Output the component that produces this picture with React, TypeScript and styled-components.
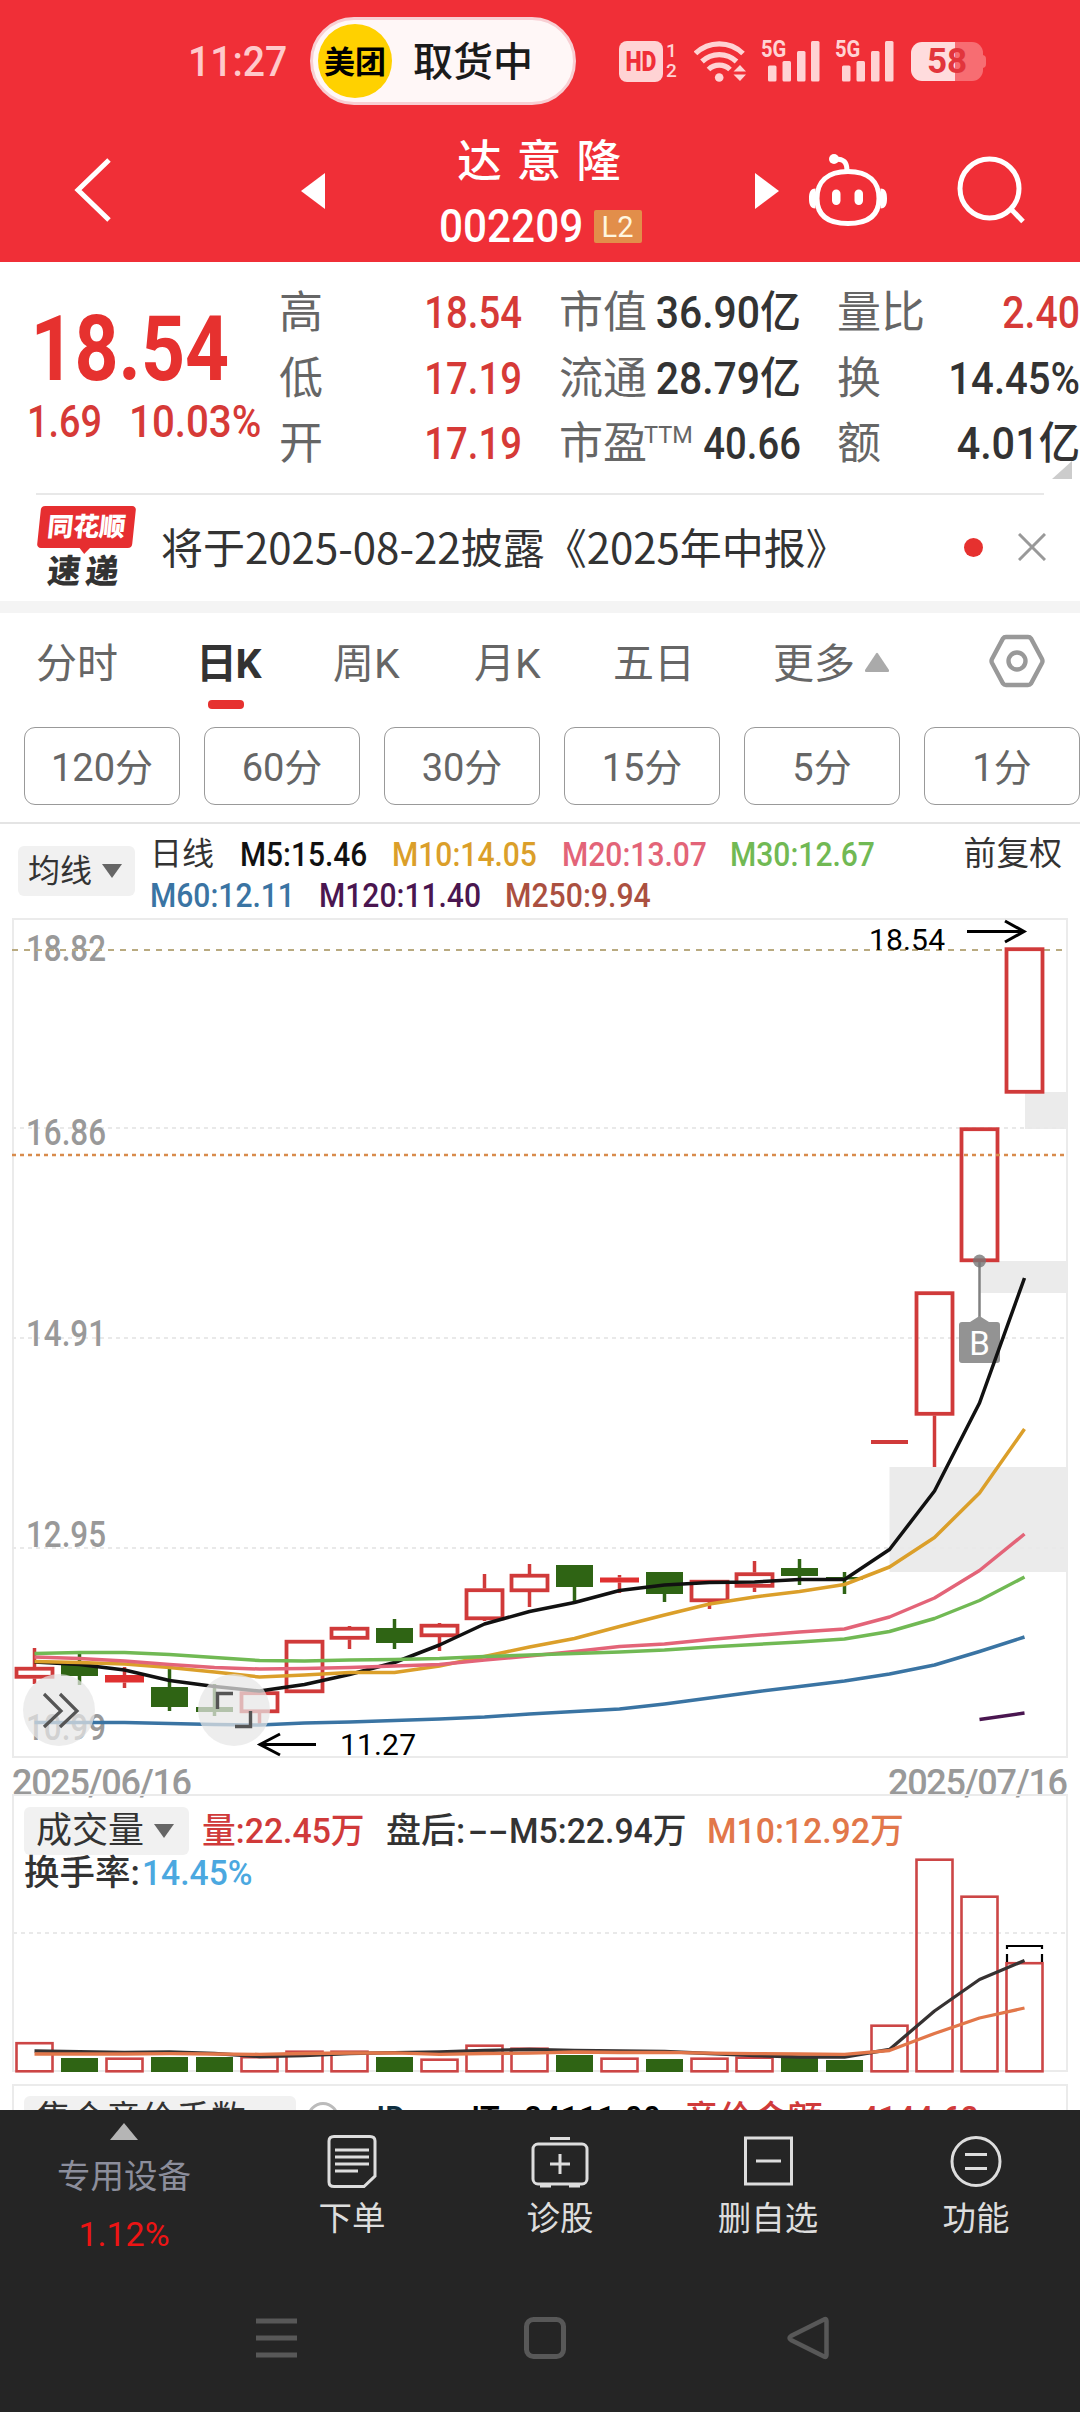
import React from 'react';
import styled, { createGlobalStyle } from 'styled-components';

interface CandleData {
  kind: 'hollow' | 'solid' | 'down' | 'flat';
  top: number;
  bottom: number;
  high: number;
  low: number;
}

interface LineData {
  color: string;
  start: number;
  values: number[];
}

const STEP: number = 45;
const FIRST: number = 34.5;
const RED: string = '#d03a3a';
const GREEN: string = '#2f6414';

const centerOf = (index: number): number => FIRST + STEP * index;

const toPoints = ({ start, values }: LineData): string =>
  values.map((y: number, i: number) => `${centerOf(start + i)},${y}`).join(' ');

const row = (kind: CandleData['kind'], top: number, bottom: number, high: number = top, low: number = bottom): CandleData =>
  ({ kind, top, bottom, high, low });

const candles: CandleData[] = [
  row('hollow', 1667, 1678.5, 1648, 1684),
  row('down', 1664.5, 1676, 1654, 1685),
  row('solid', 1675, 1682.5, 1667, 1688),
  row('down', 1687, 1707, 1668, 1711),
  row('down', 1707, 1712, 1684, 1716),
  row('hollow', 1691.5, 1713, 1691.5, 1724),
  row('hollow', 1640, 1693),
  row('hollow', 1627, 1639.5, 1626, 1649),
  row('down', 1628, 1643, 1619, 1649),
  row('hollow', 1624, 1637, 1623, 1651),
  row('hollow', 1588.5, 1620, 1574, 1621),
  row('hollow', 1574, 1592, 1564, 1607),
  row('down', 1565, 1587, 1565, 1601),
  row('solid', 1577.5, 1582.5, 1575, 1593),
  row('down', 1572, 1594, 1572, 1602),
  row('hollow', 1580, 1602, 1580, 1609),
  row('hollow', 1572.5, 1587.5, 1561, 1592),
  row('down', 1568, 1576, 1559, 1585),
  row('down', 1577, 1579.5, 1572, 1594),
  row('flat', 1440, 1444),
  row('hollow', 1291.5, 1415.5, 1291.5, 1467),
  row('hollow', 1127.5, 1262),
  row('hollow', 947.5, 1093.5),
];

const averages: LineData[] = [
  {
    color: '#3a74a3',
    start: 0,
    values: [1722.5, 1722.5, 1722.5, 1723.5, 1724.5, 1725, 1723, 1722, 1720.5, 1719, 1717, 1714, 1711.5, 1709, 1704, 1698, 1692, 1686.5, 1681, 1674, 1665, 1651.5, 1637],
  },
  { color: '#4a1650', start: 21, values: [1719.5, 1713] },
  {
    color: '#111111',
    start: 0,
    values: [1662, 1664.5, 1670, 1680.5, 1686.5, 1691, 1684.5, 1674.5, 1662.5, 1645, 1624, 1611.5, 1602.5, 1590.5, 1585, 1582.5, 1582, 1579.5, 1579.5, 1549.5, 1491, 1403, 1278],
  },
  {
    color: '#db9f2a',
    start: 0,
    values: [1661.5, 1662.5, 1664, 1667.5, 1672, 1677, 1675, 1672.5, 1672.5, 1666, 1656.5, 1647, 1638.5, 1626.5, 1615, 1604, 1597, 1591.5, 1584.5, 1567, 1537.5, 1493, 1429],
  },
  {
    color: '#e36478',
    start: 0,
    values: [1657, 1658.5, 1661, 1664.5, 1667.5, 1669, 1668.5, 1667.5, 1666, 1664.5, 1660, 1656, 1651.5, 1646.5, 1644, 1639.5, 1635.5, 1632, 1629, 1617, 1598, 1570.5, 1534],
  },
  {
    color: '#71b954',
    start: 0,
    values: [1653.5, 1652.5, 1652.5, 1654.5, 1657.5, 1660.5, 1661, 1660, 1659.5, 1658.5, 1656.5, 1655, 1653.5, 1652, 1650, 1647, 1644.5, 1642, 1639, 1631.5, 1618.5, 1600.5, 1577],
  },
];

const volumes: { up: boolean; top: number }[] = [
  { up: true, top: 2042 }, { up: false, top: 2058 }, { up: true, top: 2057.5 }, { up: false, top: 2057 },
  { up: false, top: 2057 }, { up: true, top: 2056 }, { up: true, top: 2050.5 }, { up: true, top: 2050.5 },
  { up: false, top: 2057 }, { up: true, top: 2058.5 }, { up: true, top: 2044.5 }, { up: true, top: 2047.5 },
  { up: false, top: 2055 }, { up: true, top: 2057.5 }, { up: false, top: 2059 }, { up: true, top: 2057.5 },
  { up: true, top: 2056.5 }, { up: false, top: 2058 }, { up: false, top: 2060 }, { up: true, top: 2024.5 },
  { up: true, top: 1858.5 }, { up: true, top: 1895.5 }, { up: true, top: 1962 },
];

const volumeAverages: LineData[] = [
  {
    color: '#363232',
    start: 0,
    values: [2051, 2051.7, 2052.3, 2052, 2053.5, 2056.5, 2055.5, 2053.5, 2052.7, 2052, 2050.5, 2049.5, 2050.5, 2050.8, 2051.5, 2053.5, 2055.5, 2057, 2057, 2049.5, 2011, 1979.5, 1960.5],
  },
  {
    color: '#e2774a',
    start: 0,
    values: [2054, 2054, 2054, 2053.7, 2054, 2054.3, 2053.5, 2053, 2052.8, 2054.3, 2053.5, 2053.2, 2052, 2052.5, 2052.3, 2053.2, 2053.6, 2054, 2054.3, 2050.5, 2033.5, 2018, 2008],
  },
];

const axisLabels: { text: string; y: number }[] = [
  { text: '18.82', y: 961 },
  { text: '16.86', y: 1145 },
  { text: '14.91', y: 1346 },
  { text: '12.95', y: 1547 },
  { text: '10.99', y: 1740 },
];

const Candle: React.FC<{ data: CandleData; index: number }> = ({ data, index }) => {
  const x: number = centerOf(index);
  const { kind, top, bottom, high, low } = data;
  const color: string = kind === 'down' ? GREEN : RED;
  const width: number = kind === 'solid' ? 39 : 37;

  return (
    <g>
      {high < top && <line x1={x} x2={x} y1={high} y2={top} stroke={color} strokeWidth={3.5} />}
      {low > bottom && <line x1={x} x2={x} y1={bottom} y2={low} stroke={color} strokeWidth={3.5} />}
      {kind === 'hollow'
        ? <rect x={x - 18} y={top + 1.7} width={36} height={bottom - top - 3.4} fill="none" stroke={color} strokeWidth={3.8} />
        : <rect x={x - width / 2} y={top} width={width} height={bottom - top} fill={kind === 'solid' ? '#e03030' : color} />}
    </g>
  );
};

const PriceChart: React.FC = () => (
  <Plot width="1080" height="880" viewBox="0 915 1080 880">
    <rect x="13" y="919" width="1054" height="838" fill="none" stroke="#ebebeb" strokeWidth="2" />
    <path d="M1025 1092h43v37h-43zM980 1261h88v32h-88zM889.500 1467h178.500v105h-178.500z" fill="#ebebeb" />
    <path d="M12 1128H1067M12 1338H1067M12 1548H1067" stroke="#e9e9e9" strokeWidth="2" strokeDasharray="4 4" />
    {axisLabels.map(({ text, y }) => (
      <AxisText key={text} x="26" y={y} textLength="80" lengthAdjust="spacingAndGlyphs">{text}</AxisText>
    ))}
    <path d="M12 950H1067" stroke="#b9aa80" strokeWidth="2" strokeDasharray="6 6" />
    {candles.map((data: CandleData, i: number) => <Candle key={i} data={data} index={i} />)}
    <path d="M12 1155H1067" stroke="#d88b4c" strokeWidth="2.400" strokeDasharray="4 4" />
    <path d="M979.500 1262V1318" stroke="#808080" strokeWidth="2.500" />
    <circle cx="979.500" cy="1261" r="6.500" fill="#777" fillOpacity="0.8" />
    <path d="M970 1322L979.500 1316L989 1322H997a3 3 0 0 1 3 3V1360a3 3 0 0 1-3 3H962a3 3 0 0 1-3-3V1325a3 3 0 0 1 3-3z" fill="#939393" />
    <TagText x="979.500" y="1354.500">B</TagText>
    {averages.map((line: LineData) => (
      <polyline key={line.color} points={toPoints(line)} fill="none" stroke={line.color} strokeWidth="3.500" strokeLinejoin="round" />
    ))}
    <NoteText x="869" y="949.500" textLength="76">18.54</NoteText>
    <path d="M967 931.500H1024M1005 921L1024 931.500L1005 942" fill="none" stroke="#000" strokeWidth="3" />
    <NoteText x="340" y="1755" textLength="76">11.27</NoteText>
    <path d="M316 1744.500H260M280 1734L260 1744.500L280 1755" fill="none" stroke="#000" strokeWidth="3" />
    <circle cx="59" cy="1710" r="36" fill="#e6e6e6" fillOpacity="0.72" />
    <circle cx="234" cy="1710" r="36" fill="#e6e6e6" fillOpacity="0.72" />
    <path d="M44 1694L61 1711L44 1727M60 1694L77 1711L60 1727" fill="none" stroke="#555" strokeWidth="3.200" />
    <path d="M217.500 1709V1693.500H233M250.500 1711V1726.500H235" fill="none" stroke="#555" strokeWidth="3.400" />
    <AxisText x="12" y="1795" textLength="180">2025/06/16</AxisText>
    <AxisText x="888" y="1795" textLength="180">2025/07/16</AxisText>
  </Plot>
);

const VolumeChart: React.FC = () => (
  <Plot width="1080" height="178" viewBox="0 1897 1080 178">
    <path d="M13 1933H1067" stroke="#e9e9e9" strokeWidth="2" strokeDasharray="4 4" />
    <path d="M13 1896V2071H1067V1896" fill="none" stroke="#ebebeb" strokeWidth="2" />
    {volumes.map(({ up, top }, i: number) => (up
      ? <rect key={i} x={centerOf(i) - 18} y={top + 1.2} width={36} height={2071.3 - top - 1.2} fill="none" stroke="#cc4646" strokeWidth={2.6} />
      : <rect key={i} x={centerOf(i) - 18.5} y={top} width={37} height={2072 - top} fill={GREEN} />
    ))}
    <path d="M1007 1962V1954M1007 1949V1946H1042V1949M1042 1962V1954" fill="none" stroke="#000" strokeWidth="2.200" />
    {volumeAverages.map((line: LineData) => (
      <polyline key={line.color} points={toPoints(line)} fill="none" stroke={line.color} strokeWidth="3.300" strokeLinejoin="round" />
    ))}
  </Plot>
);

const Wifi: React.FC = () => (
  <svg width="52" height="42" viewBox="0 0 52 42">
    <g fill="none" stroke="#ffd3d4" strokeWidth="5.200">
      <path d="M1.500 13.500A34 34 0 0 1 49 13.500" />
      <path d="M8 21.500A25 25 0 0 1 42.500 21.500" />
      <path d="M14.500 29.500A15.500 15.500 0 0 1 36 29.500" />
    </g>
    <circle cx="25.200" cy="37.500" r="4.300" fill="#ffd3d4" />
    <path d="M39.500 31.500L46 25L52 31.500zM39.500 34.500H52L46 41z" fill="#ffd3d4" />
  </svg>
);

const Signal: React.FC = () => (
  <SignalBox>
    <SignalText>5G</SignalText>
    <svg width="52" height="42" viewBox="0 0 52 42">
      <g fill="#ffd3d4">
        <rect x="0" y="25.500" width="8.500" height="16" rx="1.500" />
        <rect x="14.500" y="21" width="8.500" height="20.500" rx="1.500" />
        <rect x="29" y="11" width="8.500" height="30.500" rx="1.500" />
        <rect x="43" y="1" width="8.500" height="40.500" rx="1.500" />
      </g>
    </svg>
  </SignalBox>
);

const Robot: React.FC = () => (
  <svg width="80" height="74" viewBox="0 0 80 74">
    <path d="M40 17.500C61 17.500 71 28 71 44.500C71 61 61 69.500 40 69.500C19 69.500 9 61 9 44.500C9 28 19 17.500 40 17.500Z" fill="none" stroke="#fff" strokeWidth="5" />
    <path d="M39 17C39 8 36 5 27 5" fill="none" stroke="#fff" strokeWidth="5" />
    <circle cx="26" cy="5" r="5" fill="#fff" />
    <path d="M7.500 34.500C2 34.500 1 39 1 44.500C1 50 2 54.500 7.500 54.500zM72.500 34.500C78 34.500 79 39 79 44.500C79 50 78 54.500 72.500 54.500z" fill="#fff" />
    <rect x="24" y="35.500" width="8.500" height="15.500" rx="4.200" fill="#fff" />
    <rect x="46.500" y="35.500" width="8.500" height="15.500" rx="4.200" fill="#fff" />
  </svg>
);

const quoteRows: string[][] = [
  ['高', '18.54', '市值', '36.90亿', '量比', '2.40'],
  ['低', '17.19', '流通', '28.79亿', '换', '14.45%'],
  ['开', '17.19', '市盈', '40.66', '额', '4.01亿'],
];

const App: React.FC = () => {
  return (
    <Screen>
      <GlobalStyle />
      <Header>
        <StatusBar>
          <Clock>11:27</Clock>
          <Pill>
            <PillLogo>美团</PillLogo>
            <PillText>取货中</PillText>
          </Pill>
          <HdBadge><HdText>HD</HdText></HdBadge>
          <SimNumbers><span>1</span><span>2</span></SimNumbers>
          <Wifi />
          <Signal />
          <Signal />
          <Battery>58</Battery>
        </StatusBar>
        <TitleBar>
          <svg width="40" height="68" viewBox="0 0 40 68">
            <path d="M35 3L4 33L35 63" fill="none" stroke="#fff" strokeWidth="5" />
          </svg>
          <svg width="24" height="36" viewBox="0 0 24 36"><path d="M24 0V36L0 18z" fill="#fff" /></svg>
          <TitleText>
            <StockName>达意隆</StockName>
            <CodeLine>
              <StockCode>002209</StockCode>
              <LevelBadge>L2</LevelBadge>
            </CodeLine>
          </TitleText>
          <svg width="24" height="36" viewBox="0 0 24 36"><path d="M0 0V36L24 18z" fill="#fff" /></svg>
          <Robot />
          <svg width="70" height="70" viewBox="0 0 70 70">
            <circle cx="33.500" cy="32.500" r="29.500" fill="none" stroke="#fff" strokeWidth="5" />
            <path d="M55 53L67 65.500" stroke="#fff" strokeWidth="5" />
          </svg>
        </TitleBar>
      </Header>

      <Content>
        <Quote>
          <LastPrice>
            <BigPrice>18.54</BigPrice>
            <Change>
              <Figure $w={102} $size={45} $x={0.84} $color="#d63a37">1.69</Figure>
              <Figure $w={130} $size={45} $x={0.895} $color="#d63a37">10.03%</Figure>
            </Change>
          </LastPrice>
          <QuoteGrid>
            {quoteRows.map(([a, av, b, bv, c, cv]: string[], i: number) => (
              <React.Fragment key={a}>
                <QuoteLabel>{a}</QuoteLabel>
                <QuoteValue $up>{av}</QuoteValue>
                <QuoteLabel $indent={37}>{b}{i === 2 && <Ttm>TTM</Ttm>}</QuoteLabel>
                <QuoteValue $x={i === 2 ? 0.87 : 0.93}>{bv}</QuoteValue>
                <QuoteLabel $indent={36}>{c}</QuoteLabel>
                <QuoteValue $up={i === 0} $x={i === 0 ? 0.89 : i === 1 ? 0.91 : 0.94}>{cv}</QuoteValue>
              </React.Fragment>
            ))}
          </QuoteGrid>
          <Corner />
        </Quote>

        <Notice>
          <NewsLogo>
            <NewsTop>同花顺</NewsTop>
            <NewsBottom>速递</NewsBottom>
          </NewsLogo>
          <NoticeText>将于2025-08-22披露《2025年中报》</NoticeText>
          <Dot />
          <svg width="28" height="28" viewBox="0 0 28 28"><path d="M1 1L27 27M27 1L1 27" stroke="#999" strokeWidth="3" /></svg>
        </Notice>

        <Tabs>
          <Tab $w={160}>分时</Tab>
          <Tab $w={137} $active>日K</Tab>
          <Tab $w={141}>周K</Tab>
          <Tab $w={139}>月K</Tab>
          <Tab $w={160}>五日</Tab>
          <Tab $w={91}>更多</Tab>
          <svg width="26" height="20" viewBox="0 0 26 20"><path d="M12 1.500Q13 0 14 1.500L25 18Q25.500 20 24 20H2Q0.500 20 1 18z" fill="#aaa" /></svg>
          <Settings width="56" height="54" viewBox="0 0 56 54">
            <path d="M17 3H39Q41 3 42 4.500L53 25Q54 27 53 29L42 49.500Q41 51 39 51H17Q15 51 14 49.500L3 29Q2 27 3 25L14 4.500Q15 3 17 3z" fill="none" stroke="#999" strokeWidth="4.400" />
            <circle cx="28" cy="27" r="8.500" fill="none" stroke="#999" strokeWidth="4.400" />
          </Settings>
        </Tabs>

        <Periods>
          {['120分', '60分', '30分', '15分', '5分', '1分'].map((label: string) => <Period key={label}>{label}</Period>)}
        </Periods>

        <Averages>
          <Chip $w={117} $h={50} $size={32}>均线<Caret /></Chip>
          <AverageList>
            <AverageLine>
              <Figure $w={90} $size={32} $weight={400} $x={1}>日线</Figure>
              <Figure $w={152} $x={0.905} $color="#111">M5:15.46</Figure>
              <Figure $w={170} $x={0.91} $color="#db9f2a">M10:14.05</Figure>
              <Figure $w={168} $x={0.91} $color="#e36478">M20:13.07</Figure>
              <Figure $w={160} $x={0.91} $color="#71b954">M30:12.67</Figure>
            </AverageLine>
            <AverageLine>
              <Figure $w={169} $x={0.91} $color="#3a74a3">M60:12.11</Figure>
              <Figure $w={186} $x={0.91} $color="#4a1650">M120:11.40</Figure>
              <Figure $w={160} $x={0.915} $color="#ab5040">M250:9.94</Figure>
            </AverageLine>
          </AverageList>
          <Adjust>前复权</Adjust>
        </Averages>

        <PriceChart />

        <VolumePanel>
          <VolumeLine>
            <Chip $w={165} $h={48} $size={36}>成交量<Caret /></Chip>
            <Figure $w={184} $size={35} $x={0.965} $color="#d03a3a">量:22.45万</Figure>
            <Figure $w={82} $size={35} $x={1}>盘后:</Figure>
            <Figure $w={41} $size={35} $x={1.7}>--</Figure>
            <Figure $w={198} $size={35} $x={0.965}>M5:22.94万</Figure>
            <Figure $w={198} $size={35} $x={0.965} $color="#e2774a">M10:12.92万</Figure>
          </VolumeLine>
          <TurnoverLine>
            <Figure $w={118} $size={35.5} $x={1}>换手率:</Figure>
            <Figure $w={110} $size={35} $x={0.96} $color="#4ba8e0">14.45%</Figure>
          </TurnoverLine>
        </VolumePanel>
        <VolumeChart />

        <AuctionPanel>
          <Chip $w={272} $h={48} $size={35}>集合竞价手数</Chip>
          <HelpMark />
          <Figure $w={95} $size={35} $color="#0f2f3f">JD:</Figure>
          <Figure $w={62} $size={35} $color="#000">JT:</Figure>
          <Figure $w={160} $size={35} $color="#000">24111.00</Figure>
          <Figure $w={176} $size={35} $x={0.99} $color="#d03a3a">竞价金额:</Figure>
          <Figure $w={120} $size={35} $color="#d03a3a">4144.62</Figure>
        </AuctionPanel>
      </Content>

      <BottomBar>
        <Actions>
          <Sector>
            <svg width="28" height="17" viewBox="0 0 28 17"><path d="M14 0L28 17H0z" fill="#b5b5b5" /></svg>
            <SectorName>专用设备</SectorName>
            <SectorChange>1.12%</SectorChange>
          </Sector>
          <Action $w={208}>
            <Glyph viewBox="0 0 60 56">
              <path d="M12 2.500H48Q53 2.500 53 7V42L42 52.500H12Q7 52.500 7 48V7Q7 2.500 12 2.500z" />
              <path d="M13 16H47M13 23H47M13 30H47M13 37H36" />
            </Glyph>
            下单
          </Action>
          <Action $w={208}>
            <Glyph viewBox="0 0 60 56">
              <rect x="3" y="10" width="54" height="40" rx="5" />
              <path d="M20 4.500H40M30 20V40M20 30H40M10 52H21M39 52H50" />
            </Glyph>
            诊股
          </Action>
          <Action $w={208}>
            <Glyph viewBox="0 0 60 56">
              <rect x="7.500" y="4" width="46" height="46" />
              <path d="M18 27H43" />
            </Glyph>
            删自选
          </Action>
          <Action $w={208}>
            <Glyph viewBox="0 0 60 56">
              <circle cx="30" cy="27.500" r="24" />
              <path d="M19 20.500H41M19 34.500H41" />
            </Glyph>
            功能
          </Action>
        </Actions>
        <SystemKeys>
          <svg width="42" height="42" viewBox="0 0 42 42"><path d="M0 4H41M0 21H41M0 38H41" stroke="#585858" strokeWidth="5" /></svg>
          <svg width="42" height="42" viewBox="0 0 42 42"><rect x="2.500" y="2.500" width="37" height="37" rx="7" fill="none" stroke="#585858" strokeWidth="5" /></svg>
          <svg width="44" height="46" viewBox="0 0 44 46"><path d="M38 4.500Q40.500 3 40.500 6V40Q40.500 43 38 41.500L5 25Q2 23 5 21z" fill="none" stroke="#585858" strokeWidth="4.500" /></svg>
        </SystemKeys>
      </BottomBar>
    </Screen>
  );
};

export default App;

const GlobalStyle = createGlobalStyle`
  * {
    box-sizing: border-box;
  }

  body {
    margin: 0;
    background: #fff;
    font-family: Roboto, 'Noto Sans CJK SC', sans-serif;
    color: #333;
  }

  svg {
    display: block;
    flex: none;
  }
`;

const Screen = styled.div`
  display: flex;
  flex-direction: column;
  width: 1080px;
  height: 2412px;
  overflow: hidden;
  white-space: nowrap;
`;

const Header = styled.header`
  flex: none;
  height: 262px;
  background: #f02f37;
  color: #fff;
`;

const StatusBar = styled.div`
  display: flex;
  align-items: center;
  height: 122px;
  padding-left: 188px;
`;

const Clock = styled.div`
  width: 122px;
  font-size: 43px;
  font-weight: 500;
  line-height: 52px;
  color: #ffc9cb;
  transform: scaleX(0.91);
  transform-origin: left;
`;

const Pill = styled.div`
  display: flex;
  align-items: center;
  gap: 21px;
  width: 266px;
  height: 88px;
  margin-right: 43px;
  padding-left: 5px;
  border: 3px solid #f8cfd3;
  border-radius: 44px;
  background: #fff7f7;
  color: #1b1b1b;
`;

const PillLogo = styled.div`
  width: 74px;
  height: 74px;
  border-radius: 50%;
  background: #ffd100;
  color: #000;
  font-size: 31px;
  font-weight: 700;
  line-height: 77px;
  text-align: center;
`;

const PillText = styled.div`
  height: 52px;
  font-size: 40px;
  font-weight: 500;
  line-height: 55px;
`;

const HdBadge = styled.div`
  display: flex;
  align-items: center;
  justify-content: center;
  width: 44px;
  height: 41px;
  border-radius: 8px;
  background: #ffd3d4;
`;

const HdText = styled.span`
  color: #f02f37;
  font-size: 28px;
  font-weight: 900;
  line-height: 41px;
  transform: scaleX(0.82);
`;

const SimNumbers = styled.div`
  display: flex;
  flex-direction: column;
  width: 31px;
  padding-left: 3px;
  color: #ffd3d4;
  font-size: 19px;
  font-weight: 500;
  line-height: 20px;
`;

const SignalBox = styled.div`
  display: flex;
  position: relative;
  width: 52px;
  margin-left: 22px;

  & + & {
    margin-right: 17px;
  }
`;

const SignalText = styled.span`
  position: absolute;
  left: -7px;
  top: -3px;
  color: #ffd3d4;
  font-size: 24px;
  font-weight: 700;
  line-height: 24px;
  transform: scaleX(0.84);
  transform-origin: left;
`;

const Battery = styled.div`
  position: relative;
  width: 72px;
  height: 39px;
  border-radius: 11px;
  background: linear-gradient(90deg, #ffdcdd 44px, #f76d72 44px);
  color: #e2353c;
  font-size: 35px;
  font-weight: 700;
  line-height: 40px;
  text-align: center;

  &::after {
    content: '';
    position: absolute;
    left: 71px;
    top: 13px;
    width: 4px;
    height: 13px;
    border-radius: 0 4px 4px 0;
    background: #f76d72;
  }
`;

const TitleBar = styled.div`
  display: grid;
  grid-template-columns: 227px 24px 430px 53px 148px 70px;
  align-items: center;
  height: 138px;
  padding-left: 74px;
`;

const TitleText = styled.div`
  display: flex;
  flex-direction: column;
  align-items: center;
  padding-top: 6px;
`;

const StockName = styled.div`
  height: 64px;
  padding-left: 13px;
  font-size: 44.500px;
  font-weight: 500;
  line-height: 64px;
  letter-spacing: 15px;
`;

const CodeLine = styled.div`
  display: flex;
  align-items: center;
  gap: 10px;
  height: 64px;
`;

const StockCode = styled.div`
  width: 145px;
  font-size: 47px;
  font-weight: 500;
  line-height: 64px;
  transform: scaleX(0.9);
  transform-origin: left;
`;

const LevelBadge = styled.div`
  width: 48px;
  height: 33px;
  border-radius: 2px;
  background: #e28e4a;
  color: #fff6e0;
  font-size: 29px;
  line-height: 34px;
  text-align: center;
`;

const Content = styled.main`
  display: flex;
  flex-direction: column;
  flex: 1;
  min-height: 0;
  overflow: hidden;

  & > * {
    flex: none;
  }
`;

const Figure = styled.span<{ $w: number; $size?: number; $x?: number; $color?: string; $weight?: number }>`
  display: block;
  flex: none;
  width: ${({ $w }) => $w}px;
  color: ${({ $color = '#333' }) => $color};
  font-size: ${({ $size = 33 }) => $size}px;
  font-weight: ${({ $weight = 500 }) => $weight};
  transform: scaleX(${({ $x = 0.92 }) => $x});
  transform-origin: left;
`;

const Quote = styled.section`
  display: flex;
  position: relative;
  height: 231px;
  padding-top: 18px;
`;

const LastPrice = styled.div`
  width: 279px;
  padding: 23px 0 0 27px;
`;

const BigPrice = styled.div`
  height: 92px;
  padding-left: 4px;
  color: #e6312f;
  font-size: 91px;
  font-weight: 700;
  line-height: 92px;
  transform: scaleX(0.845);
  transform-origin: left;
`;

const Change = styled.div`
  display: flex;
  line-height: 54px;
`;

const QuoteGrid = styled.div`
  display: grid;
  grid-template-columns: 102px 141px 160px 119px 138px 141px;
  grid-auto-rows: 65.500px;
`;

const QuoteLabel = styled.div<{ $indent?: number }>`
  display: flex;
  height: 65px;
  padding-left: ${({ $indent = 0 }) => $indent}px;
  color: #666;
  font-size: 44px;
  line-height: 66px;
`;

const Ttm = styled.sup`
  margin-left: -3px;
  font-size: 23.500px;
  line-height: 48px;
`;

const QuoteValue = styled.div<{ $up?: boolean; $x?: number }>`
  display: flex;
  justify-content: flex-end;
  height: 65px;
  color: ${({ $up }) => ($up ? '#d63a37' : '#333')};
  font-size: 44px;
  font-weight: 500;
  line-height: 67px;
  transform: scaleX(${({ $x = 0.87 }) => $x});
  transform-origin: right;
`;

const Corner = styled.i`
  position: absolute;
  right: 8px;
  bottom: 14px;
  border-bottom: 18px solid #ccc;
  border-left: 20px solid transparent;
`;

const Notice = styled.section`
  display: flex;
  align-items: center;
  height: 120px;
  padding: 0 34px 0 36px;
  border-bottom: 12px solid #f4f4f4;
  background: linear-gradient(#e8e8e8, #e8e8e8) 36px 0 / 1008px 2px no-repeat;
`;

const NewsLogo = styled.div`
  display: flex;
  flex-direction: column;
  align-items: center;
  width: 100px;
  height: 82px;
  margin-right: 25px;
`;

const NewsTop = styled.div`
  position: relative;
  width: 95px;
  height: 42px;
  border-radius: 4px;
  background: #e62e30;
  color: #fff;
  font-size: 26px;
  font-weight: 900;
  line-height: 43px;
  text-align: center;
  transform: skewX(-6deg);

  &::after {
    content: '';
    position: absolute;
    left: 42px;
    top: 41px;
    border-top: 7px solid #e62e30;
    border-left: 6px solid transparent;
    border-right: 6px solid transparent;
  }
`;

const NewsBottom = styled.div`
  height: 40px;
  font-size: 33px;
  font-weight: 900;
  line-height: 47px;
  letter-spacing: 5px;
  transform: skewX(-6deg);
`;

const NoticeText = styled.div`
  flex: 1;
  height: 60px;
  font-family: 'Noto Sans CJK SC', sans-serif;
  font-size: 42px;
  line-height: 58px;
`;

const Dot = styled.i`
  width: 19px;
  height: 19px;
  margin-right: 35px;
  border-radius: 50%;
  background: #e6312f;
`;

const Tabs = styled.nav`
  display: flex;
  align-items: center;
  height: 98px;
  padding: 0 35px 0 36px;
`;

const Tab = styled.div<{ $w: number; $active?: boolean }>`
  position: relative;
  width: ${({ $w }) => $w}px;
  height: 98px;
  color: ${({ $active }) => ($active ? '#333' : '#666')};
  font-size: 41px;
  font-weight: ${({ $active }) => ($active ? 700 : 400)};
  letter-spacing: ${({ $active }) => ($active ? -1.5 : 0)}px;
  line-height: 102px;

  &::after {
    content: '';
    display: ${({ $active }) => ($active ? 'block' : 'none')};
    position: absolute;
    left: 12px;
    top: 87px;
    width: 36px;
    height: 9px;
    border-radius: 4px;
    background: #e6312f;
  }
`;

const Settings = styled.svg`
  margin: -2px 0 0 auto;
`;

const Periods = styled.div`
  display: flex;
  gap: 24px;
  height: 113px;
  padding: 16px 0 0 24px;
  border-bottom: 2px solid #e4e4e4;
`;

const Period = styled.div`
  flex: none;
  width: 156px;
  height: 78px;
  border: 1.500px solid #999;
  border-radius: 11px;
  color: #666;
  font-size: 38px;
  line-height: 80px;
  text-align: center;
`;

const Averages = styled.div`
  display: flex;
  height: 91px;
  padding: 9px 18px 0;
`;

const AverageList = styled.div`
  flex: 1;
  padding-left: 15px;
`;

const AverageLine = styled.div`
  display: flex;
  height: 41px;
  line-height: 43px;
`;

const Adjust = styled.div`
  height: 42px;
  font-size: 32.800px;
  line-height: 43px;
`;

const Chip = styled.div<{ $w: number; $h: number; $size: number }>`
  display: flex;
  align-items: center;
  gap: 10px;
  flex: none;
  width: ${({ $w }) => $w}px;
  height: ${({ $h }) => $h}px;
  margin-top: ${({ $h }) => ($h === 50 ? 13 : 0)}px;
  padding-left: ${({ $size }) => ($size === 32 ? 10 : 12)}px;
  border-radius: 6px;
  background: #f1f1f1;
  font-size: ${({ $size }) => $size}px;
  line-height: ${({ $h }) => $h + 4}px;
`;

const Caret = styled.i`
  border-top: 14px solid #666;
  border-left: 10.500px solid transparent;
  border-right: 10.500px solid transparent;
`;

const Plot = styled.svg`
  overflow: visible;
  font-family: Roboto, sans-serif;
`;

const AxisText = styled.text`
  fill: #999;
  font-size: 36px;
  font-weight: 500;
`;

const NoteText = styled.text`
  fill: #000;
  font-size: 30px;
`;

const TagText = styled.text`
  fill: #fff;
  font-size: 33px;
  text-anchor: middle;
`;

const VolumePanel = styled.div`
  width: 1056px;
  height: 102px;
  margin: -1px 0 1px 12px;
  padding: 11px 0 0 10px;
  border: 2px solid #ebebeb;
  border-bottom: 0;
`;

const VolumeLine = styled.div`
  display: flex;
  align-items: center;
  height: 48px;
  line-height: 51px;

  & > span:nth-child(2) {
    margin-left: 13px;
  }
`;

const TurnoverLine = styled.div`
  display: flex;
  height: 40px;
  line-height: 37px;
`;

const AuctionPanel = styled.div`
  display: flex;
  width: 1056px;
  height: 200px;
  margin-top: 9px;
  margin-left: 12px;
  padding: 10px 0 0 10px;
  border: 2px solid #ebebeb;
  line-height: 47px;
`;

const HelpMark = styled.i`
  width: 32px;
  height: 32px;
  margin: 6px 28px 0 11px;
  border: 3px solid #bbb;
  border-radius: 50%;
`;

const BottomBar = styled.footer`
  flex: none;
  height: 302px;
  background: #252525;
`;

const Actions = styled.div`
  display: flex;
  height: 152px;
`;

const Sector = styled.div`
  display: flex;
  flex-direction: column;
  align-items: center;
  width: 248px;
  padding-top: 13px;
`;

const SectorName = styled.div`
  height: 60px;
  margin-top: 7px;
  color: #8c8e9c;
  font-size: 33.500px;
  line-height: 60px;
`;

const SectorChange = styled.div`
  height: 54px;
  color: #ed1414;
  font-size: 34px;
  line-height: 54px;
`;

const Action = styled.div<{ $w: number }>`
  display: flex;
  flex-direction: column;
  align-items: center;
  width: ${({ $w }) => $w}px;
  padding-top: 24px;
  color: #ddd;
  font-size: 33.500px;
  line-height: 57px;
`;

const Glyph = styled.svg`
  width: 60px;
  height: 56px;
  fill: none;
  stroke: #ddd;
  stroke-width: 3;
`;

const SystemKeys = styled.div`
  display: grid;
  grid-template-columns: 268px 262px 44px;
  align-items: center;
  height: 152px;
  padding-left: 256px;
`;
